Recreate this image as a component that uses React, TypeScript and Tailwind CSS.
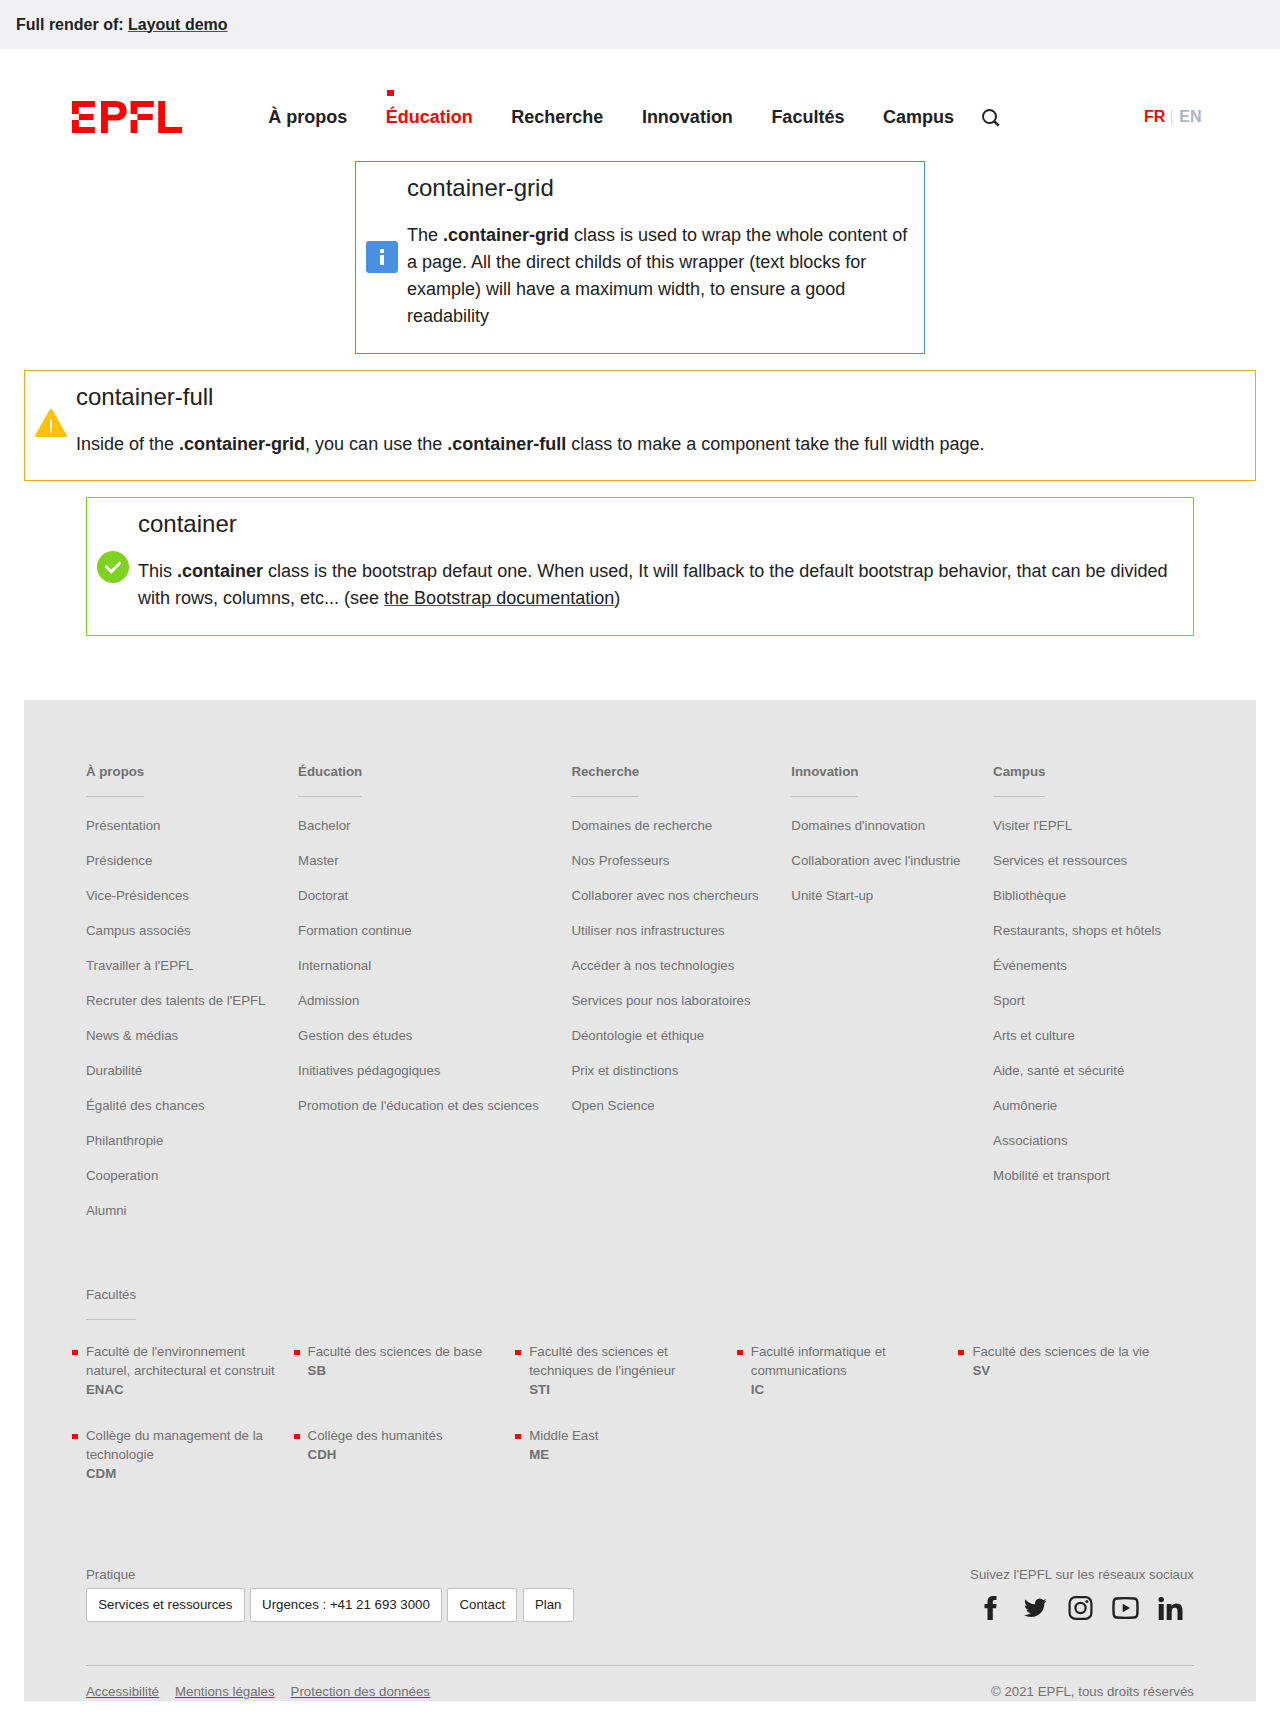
import React from "react";

const navItems = ["À propos", "Éducation", "Recherche", "Innovation", "Facultés", "Campus"];

const columns = [
  {
    title: "À propos",
    links: [
      "Présentation", "Présidence", "Vice-Présidences", "Campus associés", "Travailler à l'EPFL",
      "Recruter des talents de l'EPFL", "News & médias", "Durabilité", "Égalité des chances",
      "Philanthropie", "Cooperation", "Alumni",
    ],
  },
  {
    title: "Éducation",
    links: [
      "Bachelor", "Master", "Doctorat", "Formation continue", "International", "Admission",
      "Gestion des études", "Initiatives pédagogiques", "Promotion de l'éducation et des sciences",
    ],
  },
  {
    title: "Recherche",
    links: [
      "Domaines de recherche", "Nos Professeurs", "Collaborer avec nos chercheurs",
      "Utiliser nos infrastructures", "Accéder à nos technologies", "Services pour nos laboratoires",
      "Déontologie et éthique", "Prix et distinctions", "Open Science",
    ],
  },
  {
    title: "Innovation",
    links: ["Domaines d'innovation", "Collaboration avec l'industrie", "Unité Start-up"],
  },
  {
    title: "Campus",
    links: [
      "Visiter l'EPFL", "Services et ressources", "Bibliothèque", "Restaurants, shops et hôtels",
      "Événements", "Sport", "Arts et culture", "Aide, santé et sécurité", "Aumônerie",
      "Associations", "Mobilité et transport",
    ],
  },
];

const faculties = [
  ["Faculté de l'environnement naturel, architectural et construit", "ENAC"],
  ["Faculté des sciences de base", "SB"],
  ["Faculté des sciences et techniques de l'ingénieur", "STI"],
  ["Faculté informatique et communications", "IC"],
  ["Faculté des sciences de la vie", "SV"],
  ["Collège du management de la technologie", "CDM"],
  ["Collège des humanités", "CDH"],
  ["Middle East", "ME"],
];

function Logo() {
  return (
    <svg viewBox="0 0 182.4 53" className="h-8 w-[110px]" fill="#f00" aria-label="EPFL">
      <path d="M0 0h38v9.8H11.4v11.8H0zM11.4 21.6h24.3v9.8H11.4zM0 31.4h11.4v11.8H38V53H0z" />
      <path
        fillRule="evenodd"
        d="M48.1 0H72c11.5 0 18.6 6 18.6 16.2S83.500 32.500 72 32.500H59.500V53H48.100zM59.500 9.800v12.900h11.400c5.200 0 8.200-2.200 8.200-6.500s-3-6.400-8.200-6.400z"
      />
      <path d="M97.100 0h38.500v9.800h-27.100v11.800H97.100zM108.500 21.600h25.400v9.800h-25.400zM97.100 31.400h11.400V53H97.100z" />
      <path d="M143 0h11.400v43.200h28V53H143z" />
    </svg>
  );
}

function SearchIcon() {
  return (
    <svg viewBox="0 0 18 18" className="h-[18px] w-[18px]" fill="none" stroke="#212121">
      <circle cx="7.500" cy="7.500" r="6.500" strokeWidth="2" />
      <path d="M12.300 12.300l4.400 4.400" strokeWidth="2.600" />
    </svg>
  );
}

function InfoIcon() {
  return (
    <svg viewBox="0 0 32 32" className="h-8 w-8">
      <rect width="32" height="32" rx="3" fill="#4a90e2" />
      <path d="M14 8h4v4h-4zM14 14h4v10h-4z" fill="#fff" />
    </svg>
  );
}

function WarningIcon() {
  return (
    <svg viewBox="0 2 32 32" className="h-8 w-8">
      <path d="M14.500 2.700q1.500-1.700 3 0L31.800 28.300q.5 1.700-1 1.700H1.200q-1.500 0-1-1.700z" fill="#ffc107" />
      <path d="M15 12.500h2v9.300h-2zM15 23.300h2v2.200h-2z" fill="#fff" />
    </svg>
  );
}

function SuccessIcon() {
  return (
    <svg viewBox="0 0 32 32" className="mt-px h-8 w-8">
      <circle cx="16" cy="16" r="16" fill="#7ed321" />
      <path d="M9.300 15.800l5 4.900 8.600-8.600" fill="none" stroke="#fff" strokeWidth="2.800" strokeLinecap="round" />
    </svg>
  );
}

function Alert({
  className,
  icon,
  title,
  children,
}: {
  className: string;
  icon: React.ReactNode;
  title: string;
  children: React.ReactNode;
}) {
  return (
    <section className={"flex items-center border pl-[10px] pr-3 " + className}>
      <div className="shrink-0">{icon}</div>
      <div className="ml-[9px] pt-[12.100px] pb-[22.600px]">
        <h3 className="mb-[19.100px] text-[24px] leading-[28.800px]">{title}</h3>
        <p>{children}</p>
      </div>
    </section>
  );
}

const redUnderline = "underline decoration-[#f00] decoration-1 underline-offset-1";

function Socials() {
  return (
    <div className="flex h-[26px] fill-[#212121]">
      <svg viewBox="0 0 45 26" className="h-[26px] w-[45px]">
        <path d="M19.500 25V13.200h-3V9h3V7c0-4 2-6 5.500-6h3.500v4h-2C25 5 24.800 5.700 24.800 7v2h3.700l-.3 4.200h-3.400V25z" />
      </svg>
      <svg viewBox="0 0 45 26" className="h-[26px] w-[45px]">
        <path
          transform="translate(10 .9)"
          d="M23.643 4.937c-.835.370-1.732.620-2.675.733a4.670 4.670 0 0 0 2.048-2.578 9.300 9.300 0 0 1-2.958 1.130 4.660 4.660 0 0 0-7.938 4.250 13.229 13.229 0 0 1-9.602-4.868c-.4.690-.630 1.490-.630 2.342A4.660 4.660 0 0 0 3.960 9.824a4.647 4.647 0 0 1-2.110-.583v.060a4.660 4.660 0 0 0 3.737 4.568 4.692 4.692 0 0 1-2.104.080 4.661 4.661 0 0 0 4.352 3.234 9.348 9.348 0 0 1-5.786 1.995 9.500 9.500 0 0 1-1.112-.065 13.175 13.175 0 0 0 7.140 2.093c8.570 0 13.255-7.098 13.255-13.254 0-.200-.005-.402-.014-.602a9.470 9.470 0 0 0 2.323-2.410z"
        />
      </svg>
      <svg viewBox="0 0 45 26" className="h-[26px] w-[45px]">
        <rect x="11.600" y="2.100" width="21.800" height="21.800" rx="6" fill="none" stroke="#212121" strokeWidth="2.200" />
        <circle cx="22.500" cy="13" r="5.100" fill="none" stroke="#212121" strokeWidth="2.200" />
        <circle cx="28.900" cy="6.600" r="1.500" />
      </svg>
      <svg viewBox="0 0 45 26" className="h-[26px] w-[45px]">
        <path
          d="M14 3.500q8.500-.7 17 0 3 .2 3.300 3.200.500 6.300 0 12.600-.3 3-3.300 3.200-8.500.7-17 0-3-.2-3.300-3.200-.500-6.300 0-12.600.300-3 3.300-3.200z"
          fill="none"
          stroke="#212121"
          strokeWidth="2.400"
        />
        <path d="M19.700 8.800l7.400 4.200-7.400 4.200z" />
      </svg>
      <svg viewBox="0 0 45 26" className="h-[26px] w-[45px]">
        <circle cx="13.200" cy="4.600" r="2.700" />
        <path d="M10.700 9h5v16h-5zM18.700 9h4.800v2.200c.8-1.500 2.500-2.600 4.900-2.600 4.900 0 6.100 3.100 6.100 7.400v9h-5v-8c0-2.200-.3-4.200-2.800-4.200s-3 2-3 4.100V25h-5z" />
      </svg>
    </div>
  );
}

export default function App() {
  return (
    <div className="h-[1725px] bg-white font-['Liberation_Sans',Arial,sans-serif] text-[18px] leading-[27px] text-[#212121]">
      <div className="flex h-[49px] items-center bg-[#f1f1f4] px-4 text-[16px] font-bold leading-6">
        <span>
          Full render of: <a className={redUnderline}>Layout demo</a>
        </span>
      </div>

      <header className="flex h-28 items-start pl-[72px] pr-[78.500px] pt-[52px] font-bold">
        <Logo />
        <nav className="ml-[86.300px] mt-[3px] flex gap-[38.500px]">
          {navItems.map((item) => (
            <a key={item} className={item === "Éducation" ? "relative text-[#f00]" : ""}>
              {item === "Éducation" && <i className="absolute -top-[14px] left-[1px] h-[6px] w-[7px] bg-[#f00]" />}
              {item}
            </a>
          ))}
        </nav>
        <div className="ml-[27.700px] mt-[8px]">
          <SearchIcon />
        </div>
        <div className="ml-auto mt-[4px] flex items-center text-[16px] leading-6">
          <span className="text-[#f00]">FR</span>
          <span className="mx-[6px] h-[14px] w-px bg-[#d5d5d5]" />
          <span className="ml-[1px] text-[#adb5bd]">EN</span>
        </div>
      </header>

      <main className="flex h-[539px] flex-col items-center gap-4">
        <Alert className="w-[570px] border-[#4a90e2]" icon={<InfoIcon />} title="container-grid">
          The <b>.container-grid</b> class is used to wrap the whole content of a page. All the direct childs of this
          wrapper (text blocks for example) will have a maximum width, to ensure a good readability
        </Alert>
        <Alert className="w-[1232px] border-[#f5a623]" icon={<WarningIcon />} title="container-full">
          Inside of the <b>.container-grid</b>, you can use the <b>.container-full</b> class to make a component take
          the full width page.
        </Alert>
        <Alert className="w-[1108px] border-[#7ed321]" icon={<SuccessIcon />} title="container">
          This <b>.container</b> class is the bootstrap defaut one. When used, It will fallback to the default bootstrap
          behavior, that can be divided with rows, columns, etc... (see{" "}
          <a className={redUnderline}>the Bootstrap documentation</a>)
        </Alert>
      </main>

      <footer className="mx-6 h-[1001px] overflow-hidden bg-[#e6e6e6] px-[62px] pt-[62px] text-[13.280px] leading-[19px] text-[#707070]">
        <div className="flex h-[523px] gap-[32.600px]">
          {columns.map((col) => (
            <div key={col.title} className="whitespace-nowrap">
              <h4 className="inline-block h-[35px] border-b border-[#c1c1c1] font-bold">{col.title}</h4>
              <ul className="mt-[19px] flex flex-col gap-4">
                {col.links.map((link) => (
                  <li key={link}>{link}</li>
                ))}
              </ul>
            </div>
          ))}
        </div>

        <div className="h-[280px]">
          <h4 className="inline-block h-[35px] border-b border-[#c1c1c1]">Facultés</h4>
          <ul className="mt-[22px] grid grid-cols-5 gap-y-[27px]">
            {faculties.map(([name, code]) => (
              <li key={code} className="relative pr-7">
                <i className="absolute -left-[14px] top-[8px] h-[5px] w-[6px] bg-[#f00]" />
                {name}
                <b className="block">{code}</b>
              </li>
            ))}
          </ul>
        </div>

        <div className="flex h-[101px] justify-between border-b border-[#c1c1c1]">
          <div>
            <p>Pratique</p>
            <div className="mt-1 flex gap-[5.300px] text-[#212121]">
              {["Services et ressources", "Urgences : +41 21 693 3000", "Contact", "Plan"].map((label) => (
                <a
                  key={label}
                  className="flex h-[34px] items-center rounded-[2px] border border-[#c1c1c1] bg-white px-[11.200px] pb-px"
                >
                  {label}
                </a>
              ))}
            </div>
          </div>
          <div>
            <p className="text-right">Suivez l'EPFL sur les réseaux sociaux</p>
            <div className="mr-[1.500px] mt-[11px] flex justify-end">
              <Socials />
            </div>
          </div>
        </div>

        <div className="flex justify-between pt-4">
          <div className="flex gap-4">
            {["Accessibilité", "Mentions légales", "Protection des données"].map((label) => (
              <a key={label} className={redUnderline}>
                {label}
              </a>
            ))}
          </div>
          <span>© 2021 EPFL, tous droits réservés</span>
        </div>
      </footer>
    </div>
  );
}
